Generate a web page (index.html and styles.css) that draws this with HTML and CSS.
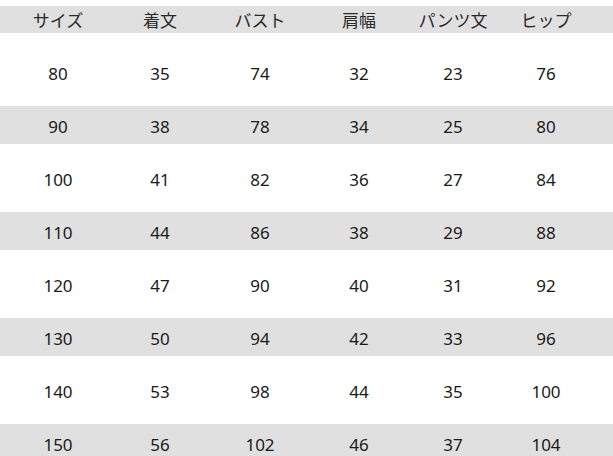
FILE: index.html
```html
<!DOCTYPE html>
<html lang="ja">
<head>
<meta charset="utf-8">
<link rel="stylesheet" href="styles.css">
</head>
<body>
<div class="table">
  <div class="row head"><span>サイズ</span><span>着文</span><span>バスト</span><span>肩幅</span><span>パンツ文</span><span>ヒップ</span></div>
  <div class="row first"><span>80</span><span>35</span><span>74</span><span>32</span><span>23</span><span>76</span></div>
  <div class="row shade"><span>90</span><span>38</span><span>78</span><span>34</span><span>25</span><span>80</span></div>
  <div class="row"><span>100</span><span>41</span><span>82</span><span>36</span><span>27</span><span>84</span></div>
  <div class="row shade"><span>110</span><span>44</span><span>86</span><span>38</span><span>29</span><span>88</span></div>
  <div class="row"><span>120</span><span>47</span><span>90</span><span>40</span><span>31</span><span>92</span></div>
  <div class="row shade"><span>130</span><span>50</span><span>94</span><span>42</span><span>33</span><span>96</span></div>
  <div class="row"><span>140</span><span>53</span><span>98</span><span>44</span><span>35</span><span>100</span></div>
  <div class="row shade"><span>150</span><span>56</span><span>102</span><span>46</span><span>37</span><span>104</span></div>
</div>
</body>
</html>
```
FILE: styles.css
```css
html, body {
  margin: 0;
  padding: 0;
  background: #ffffff;
}
body {
  font-family: "Noto Sans", "Noto Sans CJK JP", sans-serif;
  font-size: 17px;
  color: #1a1a1a;
  overflow: hidden;
}
.table {
  display: flex;
  flex-direction: column;
  padding-top: 6px;
}
.row {
  display: grid;
  grid-template-columns: 100px 104px 96px 102px 86px 100px;
  padding-left: 8px;
  padding-bottom: 2px;
  height: 53px;
  box-sizing: border-box;
  align-items: center;
  justify-items: center;
}
.row span {
  line-height: 1;
}
.head {
  height: 27px;
  padding-bottom: 0;
  background: #e0e0e0;
  font-family: "Noto Sans CJK JP", sans-serif;
  font-size: 17px;
  color: #2a2a2a;
}
.first {
  height: 68px;
  padding-top: 14px;
}
.shade {
  background: linear-gradient(#e0e0e0, #e0e0e0) 0 5px / 100% 38px no-repeat;
}
```
